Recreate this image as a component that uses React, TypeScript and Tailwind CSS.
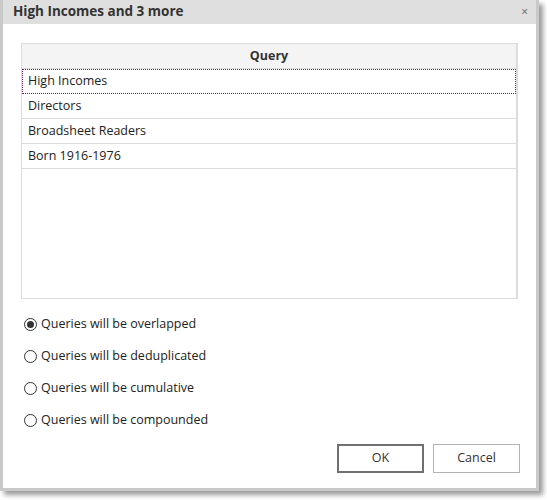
const queries = ["High Incomes", "Directors", "Broadsheet Readers", "Born 1916-1976"]

const options = [
  "Queries will be overlapped",
  "Queries will be deduplicated",
  "Queries will be cumulative",
  "Queries will be compounded",
]

function Radio({ checked }: { checked: boolean }) {
  return (
    <span className="w-[13px] h-[13px] rounded-full border border-[#333] bg-white flex items-center justify-center shrink-0">
      {checked && <span className="w-[7px] h-[7px] rounded-full bg-[#333]" />}
    </span>
  )
}

export default function App() {
  return (
    <div className="w-[547px] h-[500px] bg-white" style={{ fontFamily: '"Open Sans", "Noto Sans", sans-serif' }}>
      <div className="w-[539px] h-[491px] flex flex-col bg-white border-x-[3px] border-b-[3px] border-[#c9c9c9] shadow-[4px_4px_5px_rgba(0,0,0,0.4)]">
        {/* title bar */}
        <div className="h-[24px] bg-[#dfdfdf] flex items-center justify-between pl-[10px] pr-[8px] shrink-0">
          <span className="text-[13.5px] font-bold text-[#333] leading-none">High Incomes and 3 more</span>
          <span className="text-[12px] text-[#666] leading-none">×</span>
        </div>

        <div className="flex-1 flex flex-col px-[18px] pt-[19px]">
          {/* query grid */}
          <div className="h-[256px] border border-[#dcdcdc] border-r-2 flex flex-col">
            <div className="h-[25px] bg-[#f4f4f4] border-b border-[#dcdcdc] flex items-center justify-center text-[12.5px] font-bold text-[#333]">
              Query
            </div>
            {queries.map((q, i) => (
              <div
                key={q}
                className={
                  i === 0
                    ? "h-[25px] flex items-center pl-[5px] text-[12.5px] text-[#222] border border-dotted border-[#7a1f6a]"
                    : "h-[25px] flex items-center pl-[6px] text-[12.5px] text-[#222] border-b border-[#dcdcdc]"
                }
              >
                {q}
              </div>
            ))}
          </div>

          {/* overlap mode */}
          <div className="flex flex-col gap-[19px] mt-[19px] pl-[3px]">
            {options.map((o, i) => (
              <label key={o} className="flex items-center gap-[4px] h-[13px] text-[12.5px] text-[#222]">
                <Radio checked={i === 0} />
                {o}
              </label>
            ))}
          </div>

          <div className="flex justify-end gap-[9px] mt-auto mb-[15px] mr-[-2px]">
            <button className="w-[87px] h-[29px] border-2 border-[#707070] bg-white text-[12.5px] text-[#333]">OK</button>
            <button className="w-[87px] h-[29px] border border-[#b3b3b3] bg-white text-[12.5px] text-[#333]">Cancel</button>
          </div>
        </div>
      </div>
    </div>
  )
}
